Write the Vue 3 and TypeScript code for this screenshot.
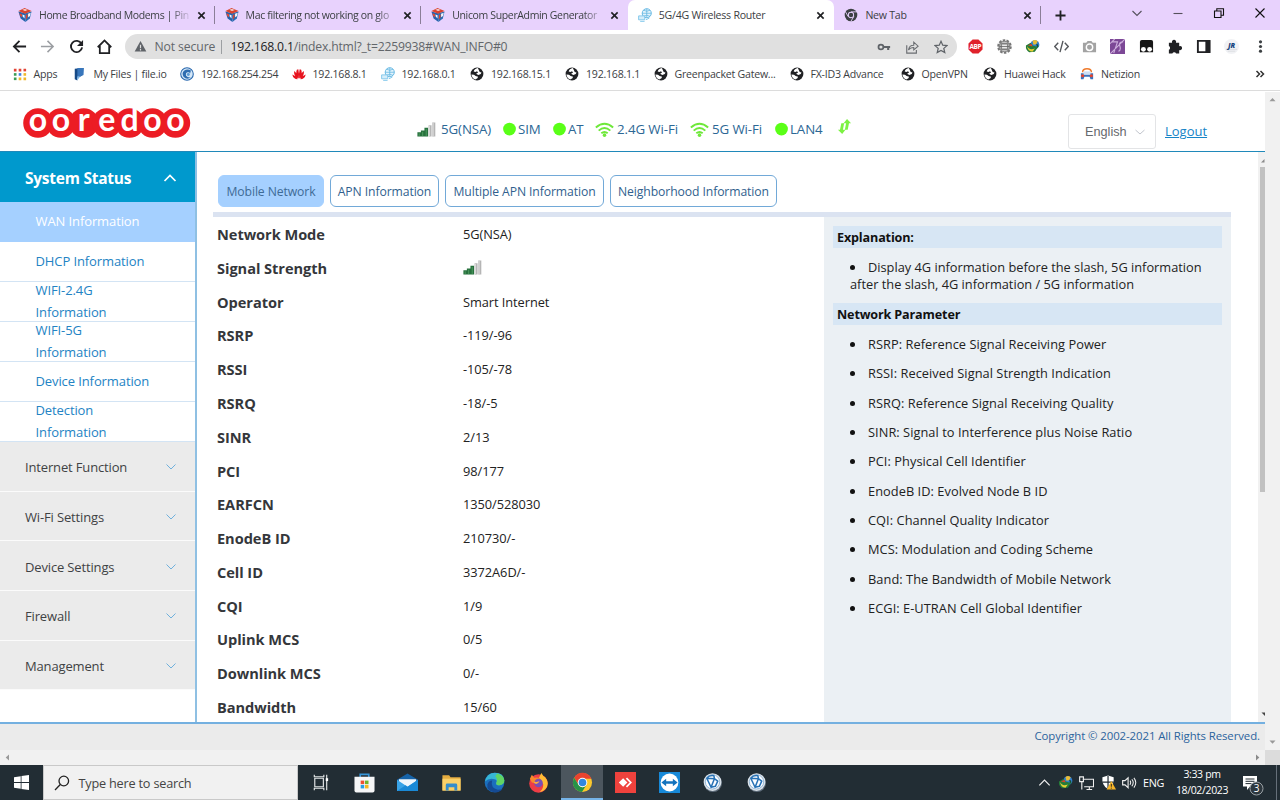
<template>
  <div class="screen">
    <div class="tab-strip">
      <div v-for="tab in tabs" :key="tab.title" class="tab" :class="{ active: tab.active }">
        <svg class="tab-icon" viewBox="0 0 16 16" v-html="icons[tab.icon]"></svg>
        <span class="tab-title" :class="{ faded: tab.faded }">{{ tab.title }}</span>
        <svg class="tab-close" viewBox="0 0 10 10"><path d="M1.5 1.5l7 7M8.5 1.5l-7 7" /></svg>
      </div>
      <svg class="new-tab" viewBox="0 0 12 12"><path d="M6 .5v11M.5 6h11" /></svg>
      <div class="window-buttons">
        <svg viewBox="0 0 12 12"><path d="M1.5 4l4.5 4.5L10.5 4" /></svg>
        <svg viewBox="0 0 12 12"><path d="M1.5 6.5h9" /></svg>
        <svg class="dark" viewBox="0 0 12 12"><path d="M1.5 4h6.5v6.5h-6.5zM3.8 4V1.7h6.7v6.6H8" /></svg>
        <svg class="dark" viewBox="0 0 12 12"><path d="M1.5 1.5l9 9M10.5 1.5l-9 9" /></svg>
      </div>
    </div>

    <div class="toolbar">
      <div class="nav-buttons">
        <svg v-for="name in navIcons" :key="name" viewBox="0 0 16 16" v-html="icons[name]"></svg>
      </div>
      <div class="omnibox">
        <svg class="warn" viewBox="0 0 14 14">
          <path d="M7 1l6.3 11.5H.7z" fill="#5f6368" />
          <path d="M7 5v3.8M7 9.8v1.4" stroke="#e0e0e0" stroke-width="1.3" />
        </svg>
        <span class="not-secure">Not secure</span>
        <span class="omni-sep"></span>
        <span class="url"><b>192.168.0.1</b>/index.html?_t=2259938#WAN_INFO#0</span>
        <div class="omni-actions">
          <svg v-for="name in omniIcons" :key="name" viewBox="0 0 16 16" v-html="icons[name]"></svg>
        </div>
      </div>
      <div class="extensions">
        <div v-for="name in extensionIcons" :key="name" class="extension">
          <svg viewBox="0 0 16 16" v-html="icons[name]"></svg>
        </div>
      </div>
    </div>

    <div class="bookmarks">
      <div v-for="mark in bookmarks" :key="mark.label" class="bookmark" :style="{ width: mark.width + 'px' }">
        <svg viewBox="0 0 16 16" v-html="icons[mark.icon]"></svg>
        <span>{{ mark.label }}</span>
      </div>
      <svg class="more" viewBox="0 0 10 10"><path d="M1.5 2l3 3-3 3M5.5 2l3 3-3 3" /></svg>
    </div>

    <div class="viewport">
      <div class="page">
        <header class="header">
          <svg class="logo" viewBox="0 0 168 30">
            <circle v-for="(letter, i) in logoLetters" :key="'c' + i" :cx="15 + i * 22.9" cy="15" r="14.8" />
            <text v-for="(letter, i) in logoLetters" :key="'t' + i" :x="15 + i * 22.9" y="23.2">{{ letter }}</text>
          </svg>
          <div class="status">
            <div v-for="item in status" :key="item.label" class="status-item" :style="{ width: item.width + 'px' }">
              <svg :class="item.icon" viewBox="0 0 20 16" v-html="icons[item.icon]"></svg>
              <span>{{ item.label }}</span>
            </div>
          </div>
          <div class="language">
            English
            <svg viewBox="0 0 10 10"><path d="M.5 3l4.5 4 4.5-4" /></svg>
          </div>
          <a class="logout">Logout</a>
        </header>

        <div class="content">
          <nav class="sidebar">
            <div class="menu-open">
              System Status
              <svg viewBox="0 0 14 10"><path d="M1.5 8L7 2.5 12.5 8" /></svg>
            </div>
            <div v-for="(item, i) in subMenu" :key="item" class="sub-item" :class="{ selected: i === 0 }">
              <span>{{ item }}</span>
            </div>
            <div v-for="item in menu" :key="item" class="menu-item">
              {{ item }}
              <svg viewBox="0 0 12 8"><path d="M1.5 1.5L6 6l4.5-4.5" /></svg>
            </div>
          </nav>

          <main class="main">
            <div class="page-tabs">
              <button
                v-for="tab in pageTabs"
                :key="tab.label"
                :class="{ current: currentTab === tab.label }"
                :style="{ width: tab.width + 'px' }"
                @click="currentTab = tab.label"
              >
                {{ tab.label }}
              </button>
            </div>
            <div class="panels">
              <div class="info">
                <div v-for="row in rows" :key="row.label" class="info-row">
                  <span class="info-label">{{ row.label }}</span>
                  <svg v-if="row.label === 'Signal Strength'" class="signal" viewBox="0 0 20 16" v-html="icons.signal"></svg>
                  <span v-else class="info-value">{{ row.value }}</span>
                </div>
              </div>
              <aside class="help">
                <h3>Explanation:</h3>
                <p><i class="dot"></i>Display 4G information before the slash, 5G information<br />after the slash, 4G information / 5G information</p>
                <h3>Network Parameter</h3>
                <ul>
                  <li v-for="text in parameters" :key="text"><i class="dot"></i>{{ text }}</li>
                </ul>
              </aside>
            </div>
          </main>
          <div class="inner-scroll">
            <svg viewBox="0 0 7 15"><path d="M3 10.5L6.5 7v3.5z" fill="#8a8a8a" /></svg>
            <div class="inner-thumb"></div>
            <svg viewBox="0 0 7 15"><path d="M3.5 5.5H7V9z" fill="#444" /></svg>
          </div>
        </div>

        <footer class="footer">Copyright © 2002-2021 All Rights Reserved.</footer>
      </div>
      <div class="v-scroll">
        <svg viewBox="0 0 15 15"><path d="M4.5 9.3L7.5 6l3 3.3z" fill="#999" /></svg>
        <svg viewBox="0 0 15 15"><path d="M4.5 5.5h6l-3 3.3z" fill="#999" /></svg>
      </div>
    </div>
    <div class="h-scroll">
      <svg viewBox="0 0 15 15"><path d="M9 4.5v6L5.700 7.5z" fill="#999" /></svg>
      <svg viewBox="0 0 15 15"><path d="M6 4.5v6l3.300-3z" fill="#8a8a8a" /></svg>
      <div class="corner"></div>
    </div>

    <div class="taskbar">
      <div class="start">
        <svg viewBox="0 0 15 15">
          <path d="M0 2.2L6.7 1.2V7H0zM7.5 1.1L15 0v7H7.5zM0 7.9h6.7v5.8L0 12.8zM7.5 7.9H15V15l-7.5-1.1z" fill="#fff" />
        </svg>
      </div>
      <div class="search">
        <svg viewBox="0 0 16 16"><circle cx="9.8" cy="6" r="4.8" /><path d="M6.3 9.5L1 15" /></svg>
        Type here to search
      </div>
      <div v-for="app in apps" :key="app" class="app" :class="{ running: app === 'chrome' }">
        <svg viewBox="0 0 22 22" v-html="icons[app]"></svg>
      </div>
      <div class="tray">
        <svg v-for="name in trayIcons" :key="name" viewBox="0 0 16 16" v-html="icons[name]"></svg>
        <span class="lang">ENG</span>
        <div class="clock"><span>3:33 pm</span><span>18/02/2023</span></div>
        <svg class="notice" viewBox="0 0 22 22">
          <path d="M1 2h14v10.500H8L5 16v-3.500H1z" fill="#fff" />
          <path d="M3.500 5h9M3.500 7.300h9M3.500 9.600h6" stroke="#222c33" />
          <circle cx="14.500" cy="14.500" r="6.500" fill="#2d373e" stroke="#99a0a4" />
          <text x="14.500" y="18" text-anchor="middle" fill="#fff" font-size="10">3</text>
        </svg>
      </div>
    </div>
  </div>
</template>

<script setup lang="ts">
import { ref } from 'vue'

interface BrowserTab {
  title: string
  icon: string
  active?: boolean
  faded?: boolean
}

const globe =
  '<circle cx="8" cy="8" r="7.300" fill="#202124"/><path d="M9 1.200c-2.500.3-4.500 2-4.800 3.800l2 .8 1.800-1 1.200 1.400-2.200 1.600 2.500 1.200 2.800-1 .8-1.800-2-.6zM1.600 8.500l2.900.3 2 1.500 2.700.7-.7 1.800-2.500 1.500C3.500 13.400 1.700 11 1.600 8.500z" fill="#fff"/>'
const router =
  '<circle cx="10" cy="6" r="5.200" fill="#e3f3fc" stroke="#58b1e0"/><path d="M4.800 6h10.400M10 .8v10.400M6.300 2.500q3.700 2.500 7.400 0M6.300 9.500q3.700-2.500 7.400 0" fill="none" stroke="#58b1e0" stroke-width=".8"/><path d="M.7 9h7v4.500h-7zM2.500 15.300h5M9 13.500l4-2" fill="#d4edfa" stroke="#79c3e9"/>'
const cube =
  '<path d="M.5 4L8 6l.5 10L3 12z" fill="#2562ab"/><path d="M15.500 4L8 6l.5 10 5-4z" fill="#2c6db3"/><path d="M.5 3.500L7.500 0l8 3.500L8 6.500z" fill="#d9442f"/><path d="M5 2l3-1 3 1.200-3 1.300z" fill="#f3dfe0"/><path d="M1.500 6l3 1v3.500L2.500 9z" fill="#e04a36"/><path d="M5 7.500l2.500.8V12L5.500 10z" fill="#f3f5fa"/><path d="M11.500 6.500l3-1-.7 3.500-2.300 1.500z" fill="#f3f5fa"/><path d="M9 8l2-.8-.3 4L9 13z" fill="#d9442f"/>'
const chromeApp =
  '<circle cx="11" cy="11" r="10" fill="#fbc82e"/><path d="M2.300 6A10 10 0 0 1 20.300 7H11a4.500 4.500 0 0 0-4 6.500z" fill="#e9432f"/><path d="M2.300 6A10 10 0 0 0 10.500 21l4.200-6.800A4.700 4.700 0 0 1 7 13.500z" fill="#279348"/><circle cx="11" cy="11" r="5" fill="#fff"/><circle cx="11" cy="11" r="4" fill="#3187e0"/>'
const ball =
  '<circle cx="11.500" cy="11.500" r="9.500" fill="#5f6d7b"/><circle cx="11" cy="10.500" r="9.300" fill="#dce3ea"/><circle cx="11" cy="10.300" r="7.500" fill="#fafcff" stroke="#7fa9cf" stroke-width=".8"/><path d="M5 6.500l8 .5-3.500 9zM13 7l3.500 2.500L14 15l-4.500 1zM5 6.500Q8 3 12.500 4L13 7" fill="none" stroke="#2872b5" stroke-width="1.600" stroke-linejoin="round"/>'
const idm =
  '<circle cx="10.500" cy="6" r="4.800" fill="#2f7fd0"/><path d="M8 2q3-2 5.500.5l-1.500 3-3 .5z" fill="#e8bc36"/><path d="M1 7l5-3 2 3 4 1 3-1-4.500 6.500-6 .5q-4-2-3.500-7z" fill="#247b39"/><path d="M2 7.500q2.500 5 8.500 2.500L8 13.500q-5 0-6-6z" fill="#e5cf35"/><path d="M3 7l4-2 1 3z" fill="#d5432c"/><path d="M12 5l2 1-1 3z" fill="#143f23"/>'

// inner markup of every icon, keyed by name
const icons: Record<string, string> = {
  cube,
  router,
  globe,
  chromeGray:
    '<circle cx="8" cy="8" r="7.200" fill="#3c4043"/><circle cx="8" cy="8" r="3.600" fill="#e8d2fd"/><circle cx="8" cy="8" r="2.500" fill="#3c4043"/><path d="M8 4.400h7M4.800 9.800L1.500 4M11.200 9.800L8 15" stroke="#e8d2fd" stroke-width="1"/>',
  back: '<path d="M15 8H2M8 2L2 8l6 6" fill="none" stroke="#202124" stroke-width="1.900"/>',
  forward: '<path d="M1 8h13M8 2l6 6-6 6" fill="none" stroke="#9b9ea2" stroke-width="1.600"/>',
  reload: '<path d="M13.300 5A6 6 0 1 0 14 9" fill="none" stroke="#202124" stroke-width="2"/><path d="M15 1v6.500H8.500z" fill="#202124"/>',
  home: '<path d="M3 7.500V15h10V7.500M.8 8.800L8 1.500l7.200 7.300" fill="none" stroke="#202124" stroke-width="1.900"/>',
  key: '<circle cx="4.500" cy="8" r="2.800" fill="none" stroke="#5f6368" stroke-width="2"/><path d="M7 8h8M12.800 8v3.300" stroke="#5f6368" stroke-width="2.400"/>',
  share: '<path d="M2 6v9h11v-3.500" fill="none" stroke="#6a6d71" stroke-width="1.300"/><path d="M4 11.500q.7-5.500 6-5.500V2.500L15 7l-5 4.300V8.500q-4 0-6 3z" fill="none" stroke="#6a6d71" stroke-width="1.200"/>',
  star: '<path d="M8 1.500l2 4.400 4.800.5-3.600 3.200 1.100 4.800L8 12l-4.300 2.400 1.100-4.800-3.600-3.200L6 5.900z" fill="none" stroke="#5f6368" stroke-width="1.400"/>',
  abp: '<path d="M4.900.5h6.200l4.400 4.400v6.200l-4.400 4.400H4.900L.5 11.100V4.900z" fill="#e0222b"/><text x="8" y="10.700" text-anchor="middle" fill="#fff" font-size="7" font-weight="700" textLength="13">ABP</text>',
  gear: '<circle cx="8" cy="8" r="6.500" fill="#aaa" stroke="#777" stroke-width="2.500" stroke-dasharray="2.600 1.400"/><circle cx="8" cy="8" r="5.500" fill="#c4c4c4" stroke="#888"/><path d="M4.500 5h7v6h-7zM2.500 8h11" fill="none" stroke="#6b6b6b"/><path d="M5.500 7h5M5.500 9h5" stroke="#eee"/>',
  idm,
  code: '<path d="M4.500 4L.8 8l3.700 4M11.500 4l3.700 4-3.700 4M9.600 2L6.400 14" fill="none" stroke="#55585c" stroke-width="1.500"/>',
  camera: '<path d="M1 4h3.500L6 2h4l1.500 2H15v10H1z" fill="#a3a3a3"/><circle cx="8" cy="8.800" r="3.400" fill="#a3a3a3" stroke="#fff" stroke-width="1.500"/>',
  js: '<path d="M0 0h16v16H0z" fill="#7c4896"/><path d="M0 16L16 0M0 5l5-5M2 3h6l-4 12M14 3q-5 0-3.500 4.500T9 13" fill="none" stroke="#cdaedd" stroke-width="1.200"/>',
  tamper: '<path d="M3 1h10q2 0 2 2v11H1V3q0-2 2-2z" fill="#171717"/><circle cx="4.700" cy="11" r="2.600" fill="#fff"/><circle cx="11.300" cy="11" r="2.600" fill="#fff"/>',
  puzzle: '<path d="M2 4h3.500a2.200 2.200 0 1 1 4 0H13v3.700a2.200 2.200 0 1 1 0 4V15.500H9.700a2.200 2.200 0 0 0-4 0H2v-4a2.200 2.200 0 0 0 0-4z" fill="#202124"/>',
  panel: '<path d="M2 2h12.500v12H2z" fill="none" stroke="#202124" stroke-width="2"/><path d="M10 2h5v12h-5z" fill="#202124"/>',
  avatar: '<circle cx="8" cy="8" r="8" fill="#f1f2f5"/><path d="M2 11h12M4 13h8" stroke="#d0d2d8" stroke-width=".7"/><text x="8" y="9.500" text-anchor="middle" fill="#17447e" font-size="7.500" font-style="italic" font-weight="800">JR</text>',
  dots: '<circle cx="8" cy="3" r="1.700" fill="#3c4043"/><circle cx="8" cy="8" r="1.700" fill="#3c4043"/><circle cx="8" cy="13" r="1.700" fill="#3c4043"/>',
  apps: '<path d="M1 2h3v3H1zM6.500 2h3v3h-3z" fill="#e24436"/><path d="M12 2h3v3h-3z" fill="#e24436"/><path d="M1 7h3v3H1z" fill="#3b9b54"/><path d="M6.500 7h3v3h-3z" fill="#3f7fe0"/><path d="M12 7h3v3h-3z" fill="#f0b72a"/><path d="M1 12h3v3H1z" fill="#3b9b54"/><path d="M6.500 12h3v3h-3zM12 12h3v3h-3z" fill="#f0b72a"/>',
  fileio: '<path d="M2 2l8-1v9l-5 2v3.500L2 14z" fill="#174a86"/><path d="M5 1h7.500l-.5 8-4 2-3-1z" fill="#3876bb"/><path d="M5 10l3 1-3 4z" fill="#7cb6e8"/>',
  swirl: '<circle cx="8" cy="8" r="7.200" fill="#d6e8f8" stroke="#2867ad" stroke-width="1.200"/><path d="M12.500 4Q8.500 1.500 5 4T4 11q3.500 4 8.500 1-4 .5-5.500-2-1-3 1.500-4 2.500-.5 3 1.500.5-2 1-3.500z" fill="#2f6db0"/><circle cx="9.500" cy="8.500" r="1.700" fill="#5c9bd4"/>',
  huawei: '<path d="M7.700 13.500Q3.500 8 5.500 3l1.700-.5Q8.500 7 7.700 13.500zM8.300 13.500Q12.500 8 10.500 3l-1.700-.5Q7.500 7 8.300 13.500zM6.800 13.500Q1.500 10 2.500 4.500 6 7 6.800 13.500zM9.200 13.500q5.300-3.500 4.300-9Q10 7 9.200 13.500zM6.500 14Q1.500 14 .3 8.500 4.500 10 6.500 14zM9.500 14q5 0 6.200-5.500Q11.500 10 9.500 14z" fill="#e8131e"/>',
  netizion: '<path d="M3 6q0-4 5-4t5 4" fill="none" stroke="#ef7b2d" stroke-width="1.800"/><path d="M1 7h14v7h-3l-1-3H5l-1 3H1z" fill="#3974bd"/><path d="M4 5h8v4H4z" fill="#cddff4"/><circle cx="3" cy="10" r="1.800" fill="#e7442e"/><circle cx="13" cy="10" r="1.800" fill="#e7442e"/>',
  signal: '<path d="M.3 11h3.700v4.500H.3zM4 9h3.800v6.500H4zM7.800 6h3.900v9.500H7.800z" fill="#27713d"/><path d="M2.200 12v3M5.900 10.500v4.500M9.700 7.500v7.500" stroke="#4f9a60" stroke-width="1"/><path d="M12.200 3.500h3.200v12h-3.200zM16.100.5h3.300v15h-3.300z" fill="#b5b5b5"/><path d="M13 4v11M17 1v14" stroke="#e4e4e4"/>',
  online: '<circle cx="10" cy="8" r="7.500" fill="#5aff17"/>',
  wifi: '<path d="M.8 5.800q9.200-8 18.400 0M3.800 9.200q6.200-5.400 12.400 0M6.600 12q3.400-2.800 6.800 0" fill="none" stroke="#6fe83b" stroke-width="2.100"/><circle cx="10" cy="14" r="1.900" fill="#6fe83b"/>',
  traffic: '<path d="M7.500 16L3 11.500h2.200L6.600 4.500h3L8.300 11.500h2.700zM12.700 0l4.300 4.500h-2.200L13.400 11.500h-3L11.700 4.500H9z" fill="#7cf243"/>',
  taskview: '<path d="M5 6.500h9v9H5z" fill="none" stroke="#e4e7e8" stroke-width="1.200"/><path d="M4.500 3v2h10V3M4.500 19v-2h10v2M17.500 3v16" fill="none" stroke="#e4e7e8" stroke-width="1.200"/><path d="M16.500 6.500h2.500v3h-2.500z" fill="#fff"/>',
  store: '<path d="M6.500 6V2.500h9V6" fill="none" stroke="#3595d8" stroke-width="1.700"/><path d="M.5 5h21v14.500q0 2-2 2h-17q-2 0-2-2z" fill="#f5f6f7"/><path d="M7 9h3.700v3.700H7z" fill="#ef5030"/><path d="M11.500 9h3.700v3.700h-3.700z" fill="#6fb52c"/><path d="M7 13.500h3.700v3.700H7z" fill="#2a9fe3"/><path d="M11.500 13.500h3.700v3.700h-3.700z" fill="#f8b61f"/>',
  mail: '<path d="M0 8L11 1.500 22 8v12H0z" fill="#1663a8"/><path d="M2 7.500h18V13L11 16 2 12z" fill="#f0f6fb"/><path d="M0 8l11 7.500L22 8v12H0z" fill="#39a3e6"/><path d="M0 20l9-6 2 1.500L22 8v12z" fill="#1a89d6"/>',
  explorer: '<path d="M1.500 3.500h7l1.500 2h10.500v14h-19z" fill="#e5ac3f"/><path d="M1.500 7h19v12.500h-19z" fill="#fad068"/><path d="M5 19.500v-6q0-1.500 1.500-1.500h9q1.500 0 1.500 1.500v6h-3V16H8v3.500z" fill="#348dcc"/>',
  edge: '<circle cx="11" cy="11" r="10.300" fill="#1b6fbd"/><path d="M1 10Q3 .7 11.500.7 21 1 21.300 9q-.3 4.500-5 5-4 0-3.500-2.500 2-3-1.800-4Q5 6 1 10z" fill="#37b6d5"/><path d="M14 1.500q7 2 7.300 7.500-.3 4.500-5 5-4 0-3.500-2.500 2-4-1-7z" fill="#61d463"/><path d="M8.500 9q-2 8 6 9.500 3.500 0 5-1-3 4-8 4Q2.500 20 3.500 13 5 9 8.500 9z" fill="#154a93"/>',
  firefox: '<circle cx="11" cy="12" r="9.700" fill="#ee3d46"/><path d="M11.500 6Q13 3 14 1q1.500 3 4 4.500 4 5 2 10-3 5-8 5.500 4-3 4-8z" fill="#ffbc35"/><path d="M2 7l2-4 2.500 3Q12 5 14 8l-4 1-1 3-5-1z" fill="#f8892c"/><circle cx="11" cy="11.500" r="4.500" fill="#7950b6"/><path d="M6 10q3 1 6-.5-1 3-3.500 3t-2.500-2.500z" fill="#ffad37"/>',
  chrome: chromeApp,
  anydesk: '<path d="M0 0h22v22H0z" fill="#ef423d"/><path d="M8.500 6.500L13 11l-4.500 4.500L4 11z" fill="#fff"/><path d="M12 6.500l4.500 4.500-4.500 4.500" fill="none" stroke="#fff" stroke-width="1.800"/>',
  teamviewer: '<path d="M0 0h22v22H0z" fill="#1789d8"/><circle cx="11" cy="11" r="9.300" fill="#fff"/><path d="M2.500 11l5-4v2.700h7V7l5 4-5 4v-2.700h-7V15z" fill="#1373bd"/>',
  ball1: ball,
  ball2: ball,
  up: '<path d="M2.500 11L8 5.500l5.500 5.500" fill="none" stroke="#f0f0f0" stroke-width="1.300"/>',
  idmTray: idm,
  network: '<path d="M4 4.500h11.500v8H5.500M8 15.500h6M11 12.500v3M3 7v8.500" fill="none" stroke="#f0f0f0" stroke-width="1.200"/><path d="M.7 2h4v5h-4z" fill="none" stroke="#f0f0f0" stroke-width="1.200"/>',
  shield: '<path d="M7.500.5l6 2q1 9-6 12.500-7-3.500-6-12.500z" fill="#fff"/><path d="M7.500 1v13M1.500 7.500h12" stroke="#222c33" stroke-width="1.300"/><path d="M11 6.500l5 9H6z" fill="#f5b428"/><path d="M11 9.500v3M11 13.500v1" stroke="#222"/>',
  speaker: '<path d="M.7 6h2.500L6.500 3v10.500L3.200 10.500H.7z" fill="none" stroke="#f0f0f0" stroke-width="1.200"/><path d="M8.500 6q1.500 2 0 4.500M10.500 4.500q3 3.500 0 7.500M12.700 3q4 5 0 10.500" fill="none" stroke="#f0f0f0" stroke-width="1.100"/>',
}

const tabs: BrowserTab[] = [
  { title: 'Home Broadband Modems | Pin', icon: 'cube', faded: true },
  { title: 'Mac filtering not working on glo', icon: 'cube', faded: true },
  { title: 'Unicom SuperAdmin Generator', icon: 'cube', faded: true },
  { title: '5G/4G Wireless Router', icon: 'router', active: true },
  { title: 'New Tab', icon: 'chromeGray' },
]

const navIcons = ['back', 'forward', 'reload', 'home']
const omniIcons = ['key', 'share', 'star']
const extensionIcons = ['abp', 'gear', 'idm', 'code', 'camera', 'js', 'tamper', 'puzzle', 'panel', 'avatar', 'dots']

const bookmarks = [
  { label: 'Apps', icon: 'apps', width: 60 },
  { label: 'My Files | file.io', icon: 'fileio', width: 107.5 },
  { label: '192.168.254.254', icon: 'swirl', width: 111.5 },
  { label: '192.168.8.1', icon: 'huawei', width: 89 },
  { label: '192.168.0.1', icon: 'router', width: 89.5 },
  { label: '192.168.15.1', icon: 'globe', width: 95 },
  { label: '192.168.1.1', icon: 'globe', width: 88.5 },
  { label: 'Greenpacket Gatew...', icon: 'globe', width: 136 },
  { label: 'FX-ID3 Advance', icon: 'globe', width: 111 },
  { label: 'OpenVPN', icon: 'globe', width: 82.5 },
  { label: 'Huawei Hack', icon: 'globe', width: 97 },
  { label: 'Netizion', icon: 'netizion', width: 80 },
]

const logoLetters = 'ooredoo'.split('')

const status = [
  { label: '5G(NSA)', icon: 'signal', width: 86 },
  { label: 'SIM', icon: 'online', width: 50 },
  { label: 'AT', icon: 'online', width: 42 },
  { label: '2.4G Wi-Fi', icon: 'wifi', width: 95 },
  { label: '5G Wi-Fi', icon: 'wifi', width: 85 },
  { label: 'LAN4', icon: 'online', width: 62 },
  { label: '', icon: 'traffic', width: 16 },
]

const subMenu = [
  'WAN Information',
  'DHCP Information',
  'WIFI-2.4G Information',
  'WIFI-5G Information',
  'Device Information',
  'Detection Information',
]
const menu = ['Internet Function', 'Wi-Fi Settings', 'Device Settings', 'Firewall', 'Management']

const pageTabs = [
  { label: 'Mobile Network', width: 106 },
  { label: 'APN Information', width: 109 },
  { label: 'Multiple APN Information', width: 159 },
  { label: 'Neighborhood Information', width: 167 },
]
const currentTab = ref('Mobile Network')

const rows = [
  { label: 'Network Mode', value: '5G(NSA)' },
  { label: 'Signal Strength', value: '' },
  { label: 'Operator', value: 'Smart Internet' },
  { label: 'RSRP', value: '-119/-96' },
  { label: 'RSSI', value: '-105/-78' },
  { label: 'RSRQ', value: '-18/-5' },
  { label: 'SINR', value: '2/13' },
  { label: 'PCI', value: '98/177' },
  { label: 'EARFCN', value: '1350/528030' },
  { label: 'EnodeB ID', value: '210730/-' },
  { label: 'Cell ID', value: '3372A6D/-' },
  { label: 'CQI', value: '1/9' },
  { label: 'Uplink MCS', value: '0/5' },
  { label: 'Downlink MCS', value: '0/-' },
  { label: 'Bandwidth', value: '15/60' },
]

const parameters = [
  'RSRP: Reference Signal Receiving Power',
  'RSSI: Received Signal Strength Indication',
  'RSRQ: Reference Signal Receiving Quality',
  'SINR: Signal to Interference plus Noise Ratio',
  'PCI: Physical Cell Identifier',
  'EnodeB ID: Evolved Node B ID',
  'CQI: Channel Quality Indicator',
  'MCS: Modulation and Coding Scheme',
  'Band: The Bandwidth of Mobile Network',
  'ECGI: E-UTRAN Cell Global Identifier',
]

const apps = ['taskview', 'store', 'mail', 'explorer', 'edge', 'firefox', 'chrome', 'anydesk', 'teamviewer', 'ball1', 'ball2']
const trayIcons = ['up', 'idmTray', 'network', 'shield', 'speaker']
</script>

<style>
body {
  margin: 0;
  overflow: hidden;
}
</style>

<style scoped>
.screen {
  width: 1280px;
  height: 800px;
  overflow: hidden;
  display: flex;
  flex-direction: column;
  background: #fff;
  font-family: "Open Sans", "Noto Sans", sans-serif;
  font-size: 13px;
  color: #222;
  white-space: nowrap;
}

svg {
  display: block;
  flex: none;
}

/* browser chrome */
.tab-strip {
  height: 30px;
  padding-left: 8px;
  box-sizing: border-box;
  display: flex;
  align-items: center;
  background: #e8d2fd;
}

.tab {
  width: 206.6px;
  height: 30px;
  padding: 0 9px 0 10px;
  box-sizing: border-box;
  display: flex;
  align-items: center;
  position: relative;
}

.tab:not(.active):not(:nth-child(3))::after {
  content: "";
  position: absolute;
  right: 0;
  top: 6px;
  width: 1px;
  height: 18px;
  background: #8b7e98;
}

.tab.active {
  background: #fff;
  border-radius: 7px 7px 0 0;
}

.tab-icon {
  width: 14px;
  height: 14px;
}

.tab-title {
  flex: 1;
  min-width: 0;
  margin: 0 5px 0 7px;
  font-size: 10.6px;
  letter-spacing: -0.25px;
  color: #3c4043;
}

.tab-title.faded {
  font-size: 10.5px;
  letter-spacing: -0.35px;
  -webkit-mask-image: linear-gradient(90deg, #000 86%, rgba(0, 0, 0, 0.15) 98%);
  mask-image: linear-gradient(90deg, #000 86%, rgba(0, 0, 0, 0.15) 98%);
}

.tab-close {
  width: 9px;
  height: 9px;
  stroke: #202124;
  stroke-width: 1.8;
}

.new-tab {
  width: 11px;
  height: 11px;
  margin-left: 14px;
  stroke: #202124;
  stroke-width: 2;
}

.window-buttons {
  margin: -4px 14px 0 auto;
  display: flex;
  gap: 29px;
}

.window-buttons svg {
  width: 12px;
  height: 12px;
  fill: none;
  stroke: #55505c;
  stroke-width: 1.1;
}

.window-buttons .dark {
  stroke: #111;
}

.toolbar {
  height: 33px;
  display: flex;
  align-items: center;
}

.nav-buttons {
  width: 124.5px;
  padding-left: 12px;
  box-sizing: border-box;
  display: flex;
  gap: 13.3px;
}

.nav-buttons svg {
  width: 15px;
  height: 15px;
}

.omnibox {
  width: 832px;
  height: 25px;
  padding: 0 9px;
  box-sizing: border-box;
  border-radius: 13px;
  display: flex;
  align-items: center;
  background: #e0e0e0;
  font-size: 12.2px;
  color: #62666a;
}

.warn {
  width: 13px;
  height: 13px;
  margin-right: 8px;
}

.not-secure {
  width: 66px;
  letter-spacing: -0.1px;
}

.omni-sep {
  width: 1px;
  height: 14px;
  margin-right: 9px;
  background: #9c9fa2;
}

.url {
  letter-spacing: -0.2px;
}

.url b {
  font-weight: 400;
  color: #202124;
}

.omni-actions {
  margin-left: auto;
  display: flex;
  gap: 14.5px;
}

.omni-actions svg {
  width: 14px;
  height: 14px;
}

.extensions {
  padding-left: 5px;
  display: flex;
}

.extension {
  width: 28.45px;
  display: flex;
  justify-content: center;
}

.extension svg {
  width: 15px;
  height: 15px;
}

.bookmarks {
  height: 28px;
  padding: 0 0 5px 12.5px;
  box-sizing: border-box;
  display: flex;
  align-items: center;
  border-bottom: 1px solid #dcdcdc;
}

.bookmark {
  display: flex;
  align-items: center;
  gap: 7px;
  font-size: 10.6px;
  letter-spacing: -0.24px;
  color: #3c4043;
}

.bookmark svg {
  width: 14px;
  height: 14px;
}

.more {
  width: 10px;
  height: 10px;
  margin: 0 15px 0 auto;
  fill: none;
  stroke: #333;
  stroke-width: 1.5;
}

/* router page */
.viewport {
  height: 658px;
  margin-top: 1px;
  display: flex;
}

.page {
  width: 1265px;
  display: flex;
  flex-direction: column;
}

.header {
  height: 60px;
  padding-left: 23px;
  box-sizing: border-box;
  display: flex;
  align-items: flex-start;
  border-bottom: 1px solid #2089ba;
}

.logo {
  width: 168px;
  height: 30px;
  margin-top: 15.5px;
  overflow: visible;
  fill: #ec1c24;
}

.logo text {
  fill: #fff;
  font-family: Lato, sans-serif;
  font-size: 32px;
  font-weight: 700;
  text-anchor: middle;
}

.status {
  width: 651px;
  height: 20px;
  margin: 27px 0 0 226px;
  display: flex;
  align-items: center;
}

.status-item {
  display: flex;
  align-items: center;
  gap: 4px;
  font-size: 13.3px;
  letter-spacing: -0.1px;
  color: #2c6795;
}

.status-item svg {
  width: 19px;
  height: 15px;
}

.status-item .signal {
  margin-right: 1px;
}

.status-item .online {
  width: 17px;
  height: 14px;
  margin: 0 -4px 0 -2px;
}

.status-item .wifi {
  margin: 0 -1px 0 0;
}

.status-item .traffic {
  margin: -5px 0 0 -2px;
}

.language {
  width: 88px;
  height: 35px;
  margin-top: 22px;
  padding: 0 10px 0 16px;
  box-sizing: border-box;
  display: flex;
  align-items: center;
  justify-content: space-between;
  border: 1px solid #e3e4e6;
  border-radius: 3px;
  font-family: "Liberation Sans", Arial, sans-serif;
  font-size: 12.7px;
  color: #66696d;
}

.language svg {
  width: 10px;
  height: 10px;
  fill: none;
  stroke: #c0c4cc;
}

.logout {
  margin: 30px 0 0 9px;
  font-size: 13px;
  color: #1684c7;
  text-decoration: underline;
}

.content {
  height: 570px;
  display: flex;
  overflow: hidden;
}

.sidebar {
  width: 197px;
  box-sizing: border-box;
  border-right: 2px solid #8fc0e3;
}

.menu-open {
  height: 50px;
  padding: 2px 18px 0 25px;
  box-sizing: border-box;
  display: flex;
  align-items: center;
  justify-content: space-between;
  background: #0099cd;
  color: #fff;
  font-size: 15.5px;
  font-weight: 700;
  letter-spacing: -0.25px;
}

.menu-open svg {
  width: 14px;
  height: 10px;
  fill: none;
  stroke: #fff;
  stroke-width: 1.7;
}

.sub-item {
  height: 40px;
  padding: 0 0 0.4px 35.5px;
  box-sizing: border-box;
  display: flex;
  align-items: center;
  border-bottom: 1px solid #d3e4f4;
  color: #2383c4;
  font-size: 13px;
  line-height: 22px;
  letter-spacing: -0.1px;
}

.sub-item span {
  width: 117px;
  white-space: normal;
}

.sub-item.selected {
  background: #a5d0ff;
  border-color: #a5d0ff;
  color: #fff;
}

.menu-item {
  height: 49.7px;
  padding: 2px 18px 0 25px;
  box-sizing: border-box;
  display: flex;
  align-items: center;
  justify-content: space-between;
  border-bottom: 1.5px solid #fbfbfb;
  background: #ebebeb;
  color: #3f4244;
  font-size: 13px;
  letter-spacing: -0.15px;
}

.menu-item svg {
  width: 12px;
  height: 8px;
  fill: none;
  stroke: #6fb0dc;
}

.main {
  width: 1034px;
  padding-left: 16px;
  box-sizing: border-box;
}

.page-tabs {
  height: 65px;
  padding: 23px 0 0 5px;
  box-sizing: border-box;
  display: flex;
  gap: 6px;
  border-bottom: 5px solid #dbe3f1;
}

.page-tabs button {
  height: 32px;
  padding: 0;
  border: 1px solid #72a9d8;
  border-radius: 6px;
  background: #fff;
  font-family: inherit;
  font-size: 12.2px;
  letter-spacing: -0.1px;
  color: #315f8e;
}

.page-tabs .current {
  background: #a5d0ff;
  border-color: #a5d0ff;
  color: #3e6b96;
}

.panels {
  display: flex;
}

.info {
  width: 611px;
  padding: 0.3px 0 0 4px;
  box-sizing: border-box;
}

.info-row {
  height: 33.78px;
  display: flex;
  align-items: center;
}

.info-label {
  width: 246px;
  font-size: 14.6px;
  font-weight: 700;
  letter-spacing: -0.05px;
  color: #35373b;
}

.info-value {
  font-size: 12.8px;
  letter-spacing: -0.05px;
  color: #222;
}

.signal {
  width: 19px;
  height: 15px;
}

.help {
  width: 407px;
  height: 506px;
  padding: 9px;
  box-sizing: border-box;
  background: #ebf0f4;
  font-size: 12.8px;
}

.help h3 {
  height: 22px;
  margin: 0;
  padding-left: 4px;
  background: #d7e6f4;
  font-size: 12.6px;
  line-height: 23px;
  letter-spacing: -0.15px;
  color: #111;
}

.help p {
  margin: 11px 0 10px 17px;
  line-height: 17px;
}

.help ul {
  margin: 5px 0 0 17px;
  padding: 0;
  list-style: none;
}

.help li {
  line-height: 29.35px;
  letter-spacing: 0.05px;
}

.dot {
  display: inline-block;
  width: 5px;
  height: 5px;
  margin-right: 13px;
  border-radius: 50%;
  background: #111;
  vertical-align: 2px;
}

.inner-scroll {
  width: 7px;
  margin-left: auto;
  display: flex;
  flex-direction: column;
  background: #f1f1f1;
}

.inner-scroll svg {
  width: 7px;
  height: 15px;
}

.inner-thumb {
  width: 5px;
  height: 325px;
  margin: 0 0 auto 2px;
  background: #c1c1c1;
}

.footer {
  height: 28px;
  padding-right: 5px;
  box-sizing: border-box;
  border-top: 2px solid #74b0e0;
  background: #ebebeb;
  color: #2b639d;
  font-size: 11.4px;
  letter-spacing: -0.08px;
  line-height: 23px;
  text-align: right;
}

.v-scroll {
  width: 15px;
  display: flex;
  flex-direction: column;
  justify-content: space-between;
  background: #f1f1f1;
}

.v-scroll svg,
.h-scroll svg {
  width: 15px;
  height: 15px;
}

.h-scroll {
  height: 15px;
  display: flex;
  background: #f1f1f1;
}

.h-scroll svg:nth-child(2) {
  margin-left: auto;
}

.corner {
  width: 15px;
  background: #dcdcdc;
}

/* windows taskbar */
.taskbar {
  height: 35px;
  display: flex;
  align-items: stretch;
  background: #222d34;
  color: #fff;
}

.start {
  width: 43px;
  display: flex;
  align-items: center;
  justify-content: center;
}

.start svg {
  width: 15px;
  height: 15px;
}

.search {
  width: 255px;
  margin-right: 0.8px;
  padding-left: 10px;
  box-sizing: border-box;
  display: flex;
  align-items: center;
  gap: 8.5px;
  background: #f1f1f1;
  border: 1px solid #c9c9c9;
  color: #444;
  font-size: 12.7px;
  letter-spacing: -0.2px;
}

.search svg {
  width: 16px;
  height: 16px;
  fill: none;
  stroke: #222;
  stroke-width: 1.3;
}

.app {
  width: 43.6px;
  display: flex;
  align-items: center;
  justify-content: center;
}

.app svg {
  width: 21px;
  height: 21px;
}

.app.running {
  margin: 0 0.8px;
  width: 42px;
  box-sizing: border-box;
  padding-top: 2px;
  background: #4c565e;
  border-bottom: 2px solid #76b4e8;
}

.tray {
  margin: 0 3px 0 auto;
  padding-right: 12px;
  display: flex;
  align-items: center;
  border-right: 1px solid #66707a;
}

.tray > svg {
  width: 15px;
  height: 15px;
  margin-right: 6.2px;
}

.lang {
  width: 32px;
  font-size: 10.8px;
  letter-spacing: -0.3px;
}

.clock {
  width: 54px;
  display: flex;
  flex-direction: column;
  align-items: center;
  font-size: 10.5px;
  line-height: 15.5px;
  letter-spacing: -0.35px;
}

.tray > .notice {
  width: 22px;
  height: 22px;
  margin: 4px 0 0 13px;
}
</style>
